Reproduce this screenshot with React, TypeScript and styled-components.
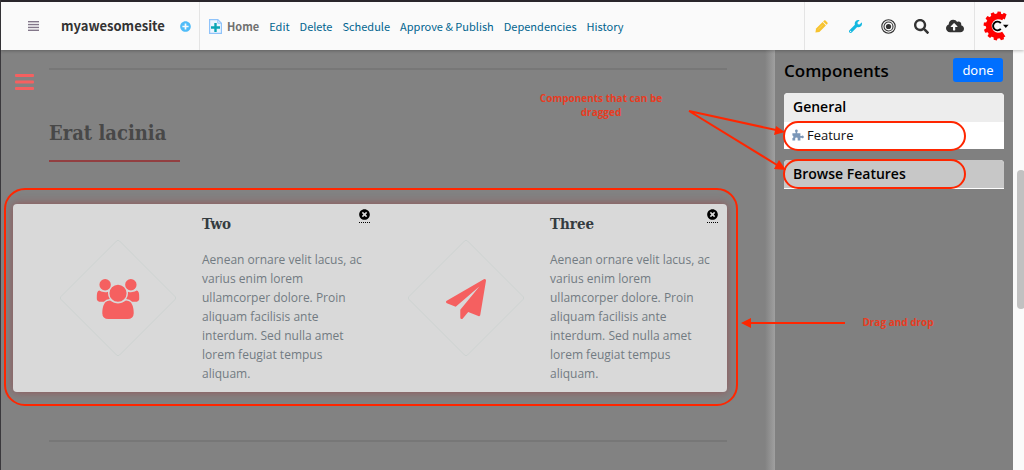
import React from "react";
import styled, { createGlobalStyle } from "styled-components";
import { FaCloudUploadAlt, FaPlusCircle, FaSearch, FaTimesCircle, FaWrench } from "react-icons/fa";

const RED = "#ff2600";
const CORAL = "#f56060";
const NAV_FONT = `"Noto Sans CJK SC", "Open Sans", sans-serif`;
const BODY_FONT = `"Open Sans", "Noto Sans", sans-serif`;
const SLAB_FONT = `"Roboto Slab", "DejaVu Serif Condensed", "DejaVu Serif", serif`;

const GlobalStyle = createGlobalStyle`
  *, *::before, *::after { box-sizing: border-box; }
  body { margin: 0; background: #828282; font-family: ${BODY_FONT}; overflow: hidden; }
  button { font: inherit; border: 0; background: none; padding: 0; cursor: pointer; }
  h1, h2, h3, p { margin: 0; }
  svg { display: block; flex: none; }
`;

const Page = styled.div`
  display: flex;
  flex-direction: column;
  min-height: 100vh;
  border-left: 1px solid #3a383c;
`;

const Header = styled.header`
  position: relative;
  z-index: 2;
  display: flex;
  align-items: stretch;
  height: 50px;
  border-top: 2px solid #29262b;
  background: #fafafa;
  box-shadow: 0 1px 3px rgba(0, 0, 0, 0.25);
  font-family: ${NAV_FONT};
  line-height: 20px;
`;

const SiteArea = styled.div`
  display: flex;
  align-items: center;
  width: 198px;
  padding: 0 8px 0 27px;
`;

const SiteName = styled.span`
  flex: 1;
  padding-left: 22px;
  font-size: 13px;
  font-weight: 700;
  color: #333;
`;

const IconButton = styled.button<{ $color: string }>`
  display: grid;
  place-items: center;
  color: ${(p) => p.$color};
`;

const Nav = styled.nav`
  display: flex;
  flex: 1;
  align-items: center;
  gap: 10px;
  padding-left: 9px;
  border-left: 1px solid #e4e4e4;
  font-size: 11px;
  white-space: nowrap;
`;

const Current = styled.span`
  display: flex;
  align-items: center;
  gap: 5px;
  font-weight: 700;
  color: #707070;
`;

const NavLink = styled.a`
  color: #00648f;
  text-decoration: none;
`;

const Tools = styled.div`
  display: grid;
  grid-template-columns: repeat(5, 1fr);
  width: 171px;
  padding-right: 2px;
  border-left: 1px solid #e4e4e4;
  border-right: 1px solid #e4e4e4;
`;

const AccountButton = styled.button`
  display: flex;
  align-items: center;
  width: 49px;
  padding-left: 8px;
`;

const Workspace = styled.div`
  display: flex;
  flex: 1;
`;

const Canvas = styled.main`
  position: relative;
  flex: 1;
  min-width: 0;
  padding: 18px 48px 0;
  background: linear-gradient(to left, #a0a0a0, #828282 10px);
`;

const MenuButton = styled(IconButton)`
  position: absolute;
  top: 24px;
  left: 14px;
`;

const Rule = styled.hr`
  height: 2px;
  margin: 0;
  border: 0;
  background: #777;
`;

const SectionTitle = styled.h1`
  display: inline-block;
  min-width: 131px;
  margin: 49px 0 42px;
  padding-bottom: 12px;
  border-bottom: 2px solid #923f41;
  font-family: ${SLAB_FONT};
  font-size: 20px;
  line-height: 29px;
  color: #484848;
`;

const DropZone = styled.section`
  position: relative;
  display: flex;
  margin: 0 0 48px -36px;
  padding: 0 9px;
  border-radius: 4px;
  background: #d9d9d9;
  box-shadow: 0 0 10px rgba(160, 55, 60, 0.65);
`;

const DropOutline = styled.div`
  position: absolute;
  inset: -16px -11px -14px -9px;
  border: 2px solid ${RED};
  border-radius: 21px;
  pointer-events: none;
`;

const Feature = styled.article`
  position: relative;
  display: flex;
  flex: 1;
  align-items: center;
  gap: 25px;
  min-width: 0;
  padding: 10px 4px 9px 37px;
`;

const FeatureText = styled.div`
  flex: 1;
  min-width: 0;
`;

const FeatureTitle = styled.h2`
  margin-bottom: 15px;
  font-family: ${SLAB_FONT};
  font-size: 15px;
  line-height: 21px;
  color: #343b40;
`;

const FeatureBody = styled.p`
  font-size: 12px;
  line-height: 19px;
  color: #727b82;
`;

const RemoveButton = styled(IconButton)`
  position: absolute;
  top: 5px;
  right: 0;
  padding-bottom: 2px;
  border-bottom: 1px dotted #000;
`;

const Panel = styled.aside`
  position: relative;
  width: 238px;
  padding: 8px 9px;
  background: #808080;
`;

const PanelHead = styled.div`
  display: flex;
  align-items: flex-end;
  justify-content: space-between;
  margin-bottom: 11px;
  padding-right: 1px;
`;

const PanelTitle = styled.h2`
  font-size: 17px;
  font-weight: 600;
  line-height: 22px;
  color: #000;
`;

const DoneButton = styled.button`
  width: 50px;
  height: 24px;
  border-radius: 3px;
  background: #006fff;
  color: #fff;
  font-family: "Noto Sans", sans-serif;
  font-size: 13px;
  line-height: 20px;
`;

const Group = styled.section`
  margin-bottom: 11px;
  border-radius: 4px 4px 0 0;
  background: #fff;
`;

const GroupTitle = styled.h3<{ $shade: string; $rule: string }>`
  position: relative;
  padding: 4px 9px;
  border-bottom: 1px solid ${(p) => p.$rule};
  border-radius: 4px 4px 0 0;
  background: ${(p) => p.$shade};
  font-size: 14px;
  font-weight: 600;
  line-height: 20px;
  color: #000;
`;

const ComponentItem = styled.div`
  position: relative;
  display: flex;
  align-items: center;
  gap: 3px;
  padding: 3px 8px 4px;
  font-size: 13px;
  line-height: 20px;
  color: #111;
`;

const Pill = styled.span`
  position: absolute;
  top: -1px;
  left: -1px;
  width: 183px;
  height: 30px;
  border: 2px solid ${RED};
  border-radius: 15px;
  pointer-events: none;
`;

const Arrow = styled.svg<{ $top: number; $left: number }>`
  position: absolute;
  top: ${(p) => p.$top}px;
  left: ${(p) => p.$left}px;
  overflow: visible;
  pointer-events: none;
`;

const Note = styled.p<{ $top: number; $left: number; $width: number }>`
  position: absolute;
  top: ${(p) => p.$top}px;
  left: ${(p) => p.$left}px;
  width: ${(p) => p.$width}px;
  font-size: 10px;
  font-weight: 700;
  line-height: 14px;
  text-align: center;
  color: #e83c22;
`;

const ScrollTrack = styled.div`
  width: 11px;
  padding: 120px 0 0 4px;
  background: #fafafa;
  overflow: hidden;
`;

const ScrollThumb = styled.div`
  width: 8px;
  height: 139px;
  border-radius: 4px;
  background: #c1c1c1;
`;

const Bars = ({ width, height, bar, count }: { width: number; height: number; bar: number; count: number }) => (
  <svg width={width} height={height} fill="currentColor" aria-hidden="true">
    {Array.from({ length: count }, (_, i) => (
      <rect key={i} y={(i * (height - bar)) / (count - 1)} width={width} height={bar} rx={bar > 2 ? 1 : 0} />
    ))}
  </svg>
);

const PageIcon = () => (
  <svg width="13" height="15" viewBox="0 0 13 15" aria-hidden="true">
    <path d="M.6.6h8.2l3.6 3.6v10.200H.6z" fill="#eef6ff" stroke="#8fc3fa" strokeWidth="1.200" />
    <path d="M8.800.8v3.400h3.400" fill="none" stroke="#8fc3fa" />
    <path d="M6.500 4v9M2 8.500h9" stroke="#0ba5b5" strokeWidth="2.400" />
  </svg>
);

const PencilIcon = () => (
  <svg width="13" height="13" viewBox="0 0 13 13" fill="currentColor" aria-hidden="true">
    <path d="M.4 12.600l.7-4L7.600 2.100l3.300 3.300-6.500 6.500z" />
    <path d="M8.200 1.500l.9-.9q.7-.6 1.400 0l1.900 1.900q.6.700 0 1.400l-.9.900z" />
    <path d="M3 9.600l4.800-4.800" stroke="#fbdc85" strokeWidth=".6" />
  </svg>
);

const PuzzleIcon = () => (
  <svg width="12" height="12" viewBox="0 0 12 12" fill="#7b97b8" aria-hidden="true">
    <path d="M.4 4.300h3.200V3.100Q2.900 2.600 3 1.700 3.200.5 4.400.5t1.400 1.200q.1.900-.6 1.400v1.200h3.200v2.800h1.100q.4-.6 1.100-.6 1.200.1 1.200 1.400t-1.200 1.400q-.7 0-1.100-.6H8.400v2.800H5.700V9.700q.3-1.200-1.200-1.200T3.200 9.700v1.800H.4V9.100l.9-.4V7L.4 6.600z" />
  </svg>
);

const TargetIcon = () => (
  <svg width="15" height="15" viewBox="0 0 15 15" fill="none" stroke="currentColor" aria-hidden="true">
    <circle cx="7.500" cy="7.500" r="6.700" strokeWidth="1.100" />
    <circle cx="7.500" cy="7.500" r="4.500" strokeWidth="1.100" />
    <circle cx="7.500" cy="7.500" r="2.600" fill="currentColor" stroke="none" />
  </svg>
);

const teeth = [72, 101, 130, 159, 188, 217, 246, 275, 300];

const Logo = () => (
  <svg width="27" height="30" viewBox="0 0 27 30" aria-hidden="true">
    <g fill="#fe0000">
      {teeth.map((a) => (
        <path key={a} d="M24 12.400l5.400 1v3.200l-5.400 1z" transform={`rotate(${a} 15 15)`} />
      ))}
    </g>
    <path d="M20.800 6.900A9.700 9.700 0 1 0 20.800 23.100" fill="none" stroke="#fe0000" strokeWidth="5.800" />
    <path d="M17.800 12.100A4.400 4.400 0 1 0 17.800 17.900" fill="none" stroke="#000" strokeWidth="1.900" />
    <path d="M20 13.700h5.600l-2.800 3.400z" fill="#000" />
  </svg>
);

const UsersIcon = () => (
  <path d="M593 896q-162 5-265 128h-134q-82 0-138-40.500t-56-118.500q0-353 124-353 6 0 43.500 21t97.500 42.500 119 21.500q67 0 133-23-5 37-5 66 0 139 81 256zm1071 637q0 120-73 189.500t-194 69.500h-874q-121 0-194-69.500t-73-189.500q0-53 3.500-103.500t14-109 26.500-108.500 43-97.500 62-81 85.500-53.500 111.500-20q10 0 43 21.500t73 48 107 48 135 21.500 135-21.500 107-48 73-48 43-21.500q61 0 111.500 20t85.500 53.500 62 81 43 97.500 26.500 108.500 14 109 3.500 103.500zm-1024-1277q0 106-75 181t-181 75-181-75-75-181 75-181 181-75 181 75 75 181zm704 384q0 159-112.500 271.500t-271.500 112.500-271.500-112.500-112.500-271.500 112.500-271.500 271.500-112.500 271.500 112.500 112.500 271.500zm576 225q0 78-56 118.500t-138 40.500h-134q-103-123-265-128 81-117 81-256 0-29-5-66 66 23 133 23 59 0 119-21.500t97.500-42.500 43.500-21q124 0 124 353zm-128-609q0 106-75 181t-181 75-181-75-75-181 75-181 181-75 181 75 75 181z" />
);

const PlaneIcon = () => (
  <path d="M1764 11q33 24 27 64l-256 1536q-5 29-32 45-14 8-31 8-11 0-24-5l-453-185-242 295q-18 23-49 23-13 0-22-4-19-7-30.500-23.500t-11.500-36.500v-349l864-1059-1069 925-395-162q-37-14-40-55-2-40 32-59l1664-960q15-9 32-9 20 0 36 11z" />
);

const Emblem = ({ size, children }: { size: number; children: React.ReactNode }) => (
  <svg width="118" height="118" viewBox="0 0 118 118" aria-hidden="true">
    <path
      d="M57.500 1q1.500-1.500 3 0L116 56.500q1.500 1.500 0 3L60.500 115q-1.500 1.500-3 0L2 59.500q-1.500-1.500 0-3z"
      fill="none"
      stroke="#cdd3d1"
    />
    <svg x={(118 - size) / 2} y="39" width={size} height="40" viewBox={`0 0 ${size > 40 ? 1920 : 1792} 1792`} fill={CORAL}>
      {children}
    </svg>
  </svg>
);

const links = ["Edit", "Delete", "Schedule", "Approve & Publish", "Dependencies", "History"];

const copy =
  "Aenean ornare velit lacus, ac varius enim lorem ullamcorper dolore. Proin aliquam facilisis ante interdum. Sed nulla amet lorem feugiat tempus aliquam.";

const features = [
  { title: "Two", size: 43, icon: <UsersIcon /> },
  { title: "Three", size: 40, icon: <PlaneIcon /> },
];

export default function App() {
  return (
    <>
      <GlobalStyle />
      <Page>
        <Header>
          <SiteArea>
            <IconButton $color="#83778a" aria-label="Toggle sidebar">
              <Bars width={11} height={10} bar={1.4} count={4} />
            </IconButton>
            <SiteName>myawesomesite</SiteName>
            <IconButton $color="#4fbcf8" aria-label="Create">
              <FaPlusCircle size={11} />
            </IconButton>
          </SiteArea>
          <Nav>
            <Current>
              <PageIcon />
              Home
            </Current>
            {links.map((label) => (
              <NavLink href="#" key={label}>
                {label}
              </NavLink>
            ))}
          </Nav>
          <Tools>
            <IconButton $color="#f7c32e" aria-label="Edit mode">
              <PencilIcon />
            </IconButton>
            <IconButton $color="#14b8e0" aria-label="Tools">
              <FaWrench size={13} />
            </IconButton>
            <IconButton $color="#333" aria-label="Publishing status">
              <TargetIcon />
            </IconButton>
            <IconButton $color="#333" aria-label="Search">
              <FaSearch size={15} />
            </IconButton>
            <IconButton $color="#333" aria-label="Upload">
              <FaCloudUploadAlt size={18} />
            </IconButton>
          </Tools>
          <AccountButton aria-label="Account">
            <Logo />
          </AccountButton>
        </Header>
        <Workspace>
          <Canvas>
            <MenuButton $color={CORAL} aria-label="Menu">
              <Bars width={19} height={16} bar={3} count={3} />
            </MenuButton>
            <Rule />
            <SectionTitle>Erat lacinia</SectionTitle>
            <DropZone>
              {features.map(({ title, size, icon }) => (
                <Feature key={title}>
                  <Emblem size={size}>{icon}</Emblem>
                  <FeatureText>
                    <FeatureTitle>{title}</FeatureTitle>
                    <FeatureBody>{copy}</FeatureBody>
                  </FeatureText>
                  <RemoveButton $color="#000" aria-label={`Remove ${title}`}>
                    <FaTimesCircle size={11} />
                  </RemoveButton>
                </Feature>
              ))}
              <DropOutline />
            </DropZone>
            <Rule />
          </Canvas>
          <Panel>
            <PanelHead>
              <PanelTitle>Components</PanelTitle>
              <DoneButton>done</DoneButton>
            </PanelHead>
            <Group>
              <GroupTitle $shade="#ededed" $rule="#ededed">
                General
              </GroupTitle>
              <ComponentItem>
                <PuzzleIcon />
                Feature
                <Pill />
              </ComponentItem>
            </Group>
            <Group>
              <GroupTitle $shade="#c7c7c7" $rule="#fff">
                Browse Features
                <Pill />
              </GroupTitle>
            </Group>
            <Note $top={41} $left={-239} $width={130}>
              Components that can be dragged
            </Note>
            <Arrow $top={61} $left={-86} width="97" height="60" fill={RED} stroke={RED} aria-hidden="true">
              <path d="M0 0L87 19M0 0L88 54" strokeWidth="2" />
              <path d="M96 21l-11 3 2-9zM97 59l-12-1 5-9z" stroke="none" />
            </Arrow>
            <Arrow $top={268} $left={-34} width="104" height="10" fill={RED} stroke={RED} aria-hidden="true">
              <path d="M8 5h96" strokeWidth="2" />
              <path d="M0 5l10-5v10z" stroke="none" />
            </Arrow>
            <Note $top={265} $left={78} $width={90}>
              Drag and drop
            </Note>
          </Panel>
          <ScrollTrack>
            <ScrollThumb />
          </ScrollTrack>
        </Workspace>
      </Page>
    </>
  );
}
